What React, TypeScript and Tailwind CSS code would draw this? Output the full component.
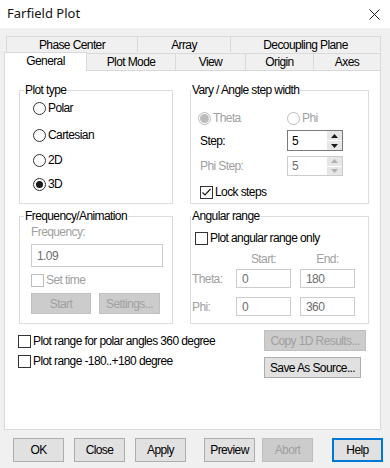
import React from "react";

type RadioProps = { label: string; checked?: boolean; disabled?: boolean };

function Radio({ label, checked = false, disabled = false }: RadioProps) {
  return (
    <div className="flex items-center gap-[2px] h-[14px]">
      <span
        className={
          disabled
            ? "w-[13px] h-[13px] rounded-full border border-[#bcbcbc] bg-white flex items-center justify-center"
            : "w-[13px] h-[13px] rounded-full border border-[#333333] bg-white flex items-center justify-center"
        }
      >
        {checked && (
          <span
            className={
              disabled
                ? "w-[9px] h-[9px] rounded-full bg-[#bcbcbc]"
                : "w-[7px] h-[7px] rounded-full bg-[#1a1a1a]"
            }
          />
        )}
      </span>
      <span className={disabled ? "text-[#a0a0a0]" : "text-black"}>{label}</span>
    </div>
  );
}

function Check({ label, checked = false, disabled = false }: RadioProps) {
  return (
    <div className="flex items-center gap-[2px] h-[14px]">
      <span
        className={
          disabled
            ? "w-[13px] h-[13px] border border-[#bcbcbc] bg-white flex items-center justify-center"
            : "w-[13px] h-[13px] border border-[#333333] bg-white flex items-center justify-center"
        }
      >
        {checked && (
          <svg width="11" height="11" viewBox="0 0 11 11">
            <polyline points="1.5,5.5 4,8 9.5,2" fill="none" stroke="#1a1a1a" strokeWidth="1.2" />
          </svg>
        )}
      </span>
      <span className={disabled ? "text-[#a0a0a0]" : "text-black"}>{label}</span>
    </div>
  );
}

function Spin({ value, disabled = false }: { value: string; disabled?: boolean }) {
  const tri = disabled ? "#b0b0b0" : "#1a1a1a";
  return (
    <div
      className={
        disabled
          ? "flex w-[56px] h-[20px] border border-[#cccccc] bg-white"
          : "flex w-[56px] h-[21px] border border-[#7a7a7a] bg-white"
      }
    >
      <div className={disabled ? "flex-1 pl-[4px] flex items-center text-[#6d6d6d]" : "flex-1 pl-[4px] flex items-center text-black"}>
        {value}
      </div>
      <div className="w-[15px] flex flex-col gap-px bg-white">
        <div className="flex-1 flex items-center justify-center bg-[#e6e6e6]">
          <svg width="7" height="4" viewBox="0 0 7 4">
            <polygon points="0,4 7,4 3.5,0" fill={tri} />
          </svg>
        </div>
        <div className="flex-1 flex items-center justify-center bg-[#e6e6e6]">
          <svg width="7" height="4" viewBox="0 0 7 4">
            <polygon points="0,0 7,0 3.5,4" fill={tri} />
          </svg>
        </div>
      </div>
    </div>
  );
}

function Btn({
  children,
  className,
  disabled = false,
}: {
  children: React.ReactNode;
  className: string;
  disabled?: boolean;
}) {
  return (
    <div
      className={
        (disabled
          ? "border border-[#bfbfbf] bg-[#cccccc] text-[#a0a0a0] "
          : "border border-[#adadad] bg-[#e1e1e1] text-black ") +
        "flex items-center justify-center " +
        className
      }
    >
      {children}
    </div>
  );
}

function Field({ value, className }: { value: string; className: string }) {
  return (
    <div className={"border border-[#cccccc] bg-white text-[#6d6d6d] flex items-center pl-[5px] " + className}>
      {value}
    </div>
  );
}

export default function App() {
  return (
    <div className="w-[390px] h-[468px] bg-[#f0f0f0] flex flex-col overflow-hidden font-['Liberation_Sans',Arial,sans-serif] text-[12px] tracking-[-0.6px] text-black">
      {/* Title bar */}
      <div className="h-[28px] bg-white flex items-center justify-between pl-[7px] pr-[10px] shrink-0">
        <span className="font-['Noto_Sans',sans-serif] text-[13px] tracking-normal text-[#111]">Farfield Plot</span>
        <svg width="11" height="11" viewBox="0 0 11 11">
          <path d="M0.5 0.5 L10.5 10.5 M10.5 0.5 L0.5 10.5" stroke="#222" strokeWidth="1" />
        </svg>
      </div>

      {/* Tabs + panel */}
      <div className="mt-[8px] ml-[4px] w-[377px] flex flex-col">
        <div className="ml-[2px] flex h-[16px]">
          <div className="w-[132px] border-t border-l border-r border-[#d9d9d9] flex items-center justify-center">Phase Center</div>
          <div className="w-[93px] border-t border-r border-[#d9d9d9] flex items-center justify-center">Array</div>
          <div className="w-[150px] border-t border-r border-[#d9d9d9] flex items-center justify-center">Decoupling Plane</div>
        </div>
        <div className="flex items-end h-[18px]">
          <div className="relative z-10 w-[83px] h-[19px] -mb-px bg-white border-t border-l border-r border-[#d9d9d9] flex items-center justify-center pb-[2px]">General</div>
          <div className="w-[89px] h-[17px] border-t border-r border-[#d9d9d9] flex items-center justify-center">Plot Mode</div>
          <div className="w-[70px] h-[17px] border-t border-r border-[#d9d9d9] flex items-center justify-center">View</div>
          <div className="w-[68px] h-[17px] border-t border-r border-[#d9d9d9] flex items-center justify-center">Origin</div>
          <div className="w-[67px] h-[17px] border-t border-r border-[#d9d9d9] flex items-center justify-center">Axes</div>
        </div>

        <div className="w-[377px] h-[360px] bg-white border border-[#d9d9d9] pl-[14px] pt-[12px] flex flex-col">
          {/* Row 1 */}
          <div className="flex gap-[17px]">
            <fieldset className="w-[154px] border border-[#dcdcdc]">
              <legend className="ml-[4px] px-[1px] leading-[14px]">Plot type</legend>
              <div className="h-[106px] pl-[13px] flex flex-col">
                <div className="mt-[4px]"><Radio label="Polar" /></div>
                <div className="mt-[13px]"><Radio label="Cartesian" /></div>
                <div className="mt-[11px]"><Radio label="2D" /></div>
                <div className="mt-[10px]"><Radio label="3D" checked /></div>
              </div>
            </fieldset>
            <fieldset className="w-[179px] border border-[#dcdcdc]">
              <legend className="px-[1px] leading-[14px]">Vary / Angle step width</legend>
              <div className="h-[105px] pl-[7px] flex flex-col">
                <div className="mt-[14px] flex">
                  <div className="w-[89px]"><Radio label="Theta" checked disabled /></div>
                  <Radio label="Phi" disabled />
                </div>
                <div className="mt-[5px] ml-[2px] flex items-center">
                  <span className="w-[87px]">Step:</span>
                  <Spin value="5" />
                </div>
                <div className="mt-[5px] ml-[2px] flex items-center">
                  <span className="w-[87px] text-[#a0a0a0]">Phi Step:</span>
                  <Spin value="5" disabled />
                </div>
                <div className="mt-[9px] ml-[2px]"><Check label="Lock steps" checked /></div>
              </div>
            </fieldset>
          </div>

          {/* Row 2 */}
          <div className="mt-[5px] flex gap-[17px]">
            <fieldset className="w-[154px] border border-[#dcdcdc]">
              <legend className="ml-[4px] px-[1px] leading-[14px]">Frequency/Animation</legend>
              <div className="h-[99px] pl-[11px] flex flex-col">
                <div className="mt-[2px] h-[14px] flex items-center text-[#a0a0a0]">Frequency:</div>
                <Field value="1.09" className="mt-[5px] w-[132px] h-[23px]" />
                <div className="mt-[6px]"><Check label="Set time" disabled /></div>
                <div className="mt-[6px] flex gap-[8px]">
                  <Btn disabled className="w-[60px] h-[21px]">Start</Btn>
                  <Btn disabled className="w-[61px] h-[21px]">Settings...</Btn>
                </div>
              </div>
            </fieldset>
            <fieldset className="w-[179px] border border-[#dcdcdc]">
              <legend className="px-[1px] leading-[14px]">Angular range</legend>
              <div className="h-[100px] flex flex-col">
                <div className="mt-[8px] pl-[4px]"><Check label="Plot angular range only" /></div>
                <div className="mt-[7px] ml-[45px] flex gap-[9px] h-[14px] items-center text-[#a0a0a0]">
                  <span className="w-[55px] text-center">Start:</span>
                  <span className="w-[55px] text-center">End:</span>
                </div>
                <div className="mt-[3px] pl-[1px] flex items-center">
                  <span className="w-[44px] text-[#a0a0a0]">Theta:</span>
                  <Field value="0" className="w-[55px] h-[19px]" />
                  <Field value="180" className="ml-[9px] w-[55px] h-[19px]" />
                </div>
                <div className="mt-[9px] pl-[1px] flex items-center">
                  <span className="w-[44px] text-[#a0a0a0]">Phi:</span>
                  <Field value="0" className="w-[55px] h-[19px]" />
                  <Field value="360" className="ml-[9px] w-[55px] h-[19px]" />
                </div>
              </div>
            </fieldset>
          </div>

          {/* Row 3 */}
          <div className="mt-[6px] flex">
            <div className="w-[246px] -ml-px pt-[4px] flex flex-col gap-[6px]">
              <Check label="Plot range for polar angles 360 degree" />
              <Check label="Plot range -180..+180 degree" />
            </div>
            <div className="flex flex-col gap-[6px]">
              <Btn disabled className="w-[102px] h-[21px]">Copy 1D Results...</Btn>
              <Btn className="w-[97px] h-[21px]">Save As Source...</Btn>
            </div>
          </div>
        </div>
      </div>

      {/* Bottom buttons */}
      <div className="mt-[8px] pl-[13px] flex">
        <Btn className="w-[51px] h-[24px]">OK</Btn>
        <Btn className="ml-[10px] w-[51px] h-[24px]">Close</Btn>
        <Btn className="ml-[10px] w-[51px] h-[24px]">Apply</Btn>
        <Btn className="ml-[18px] w-[51px] h-[24px]">Preview</Btn>
        <Btn disabled className="ml-[7px] w-[51px] h-[24px]">Abort</Btn>
        <div className="ml-[19px] w-[51px] h-[24px] border-2 border-[#0078d7] bg-[#e1e1e1] flex items-center justify-center">Help</div>
      </div>
    </div>
  );
}
